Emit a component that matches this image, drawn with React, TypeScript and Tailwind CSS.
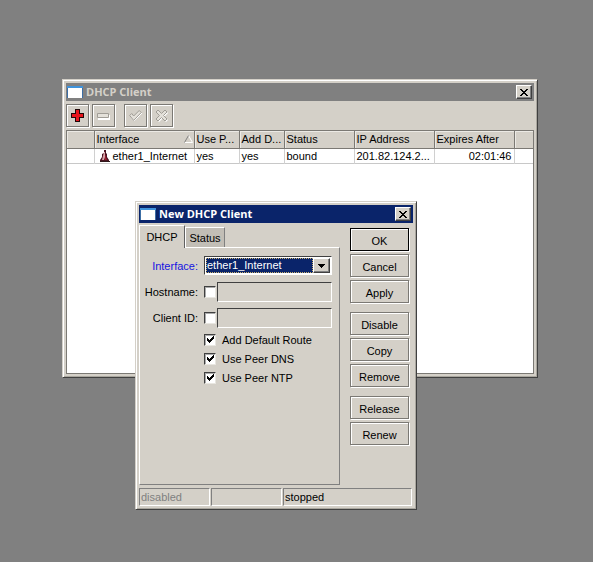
import React, { useState } from "react";
import clsx from "clsx";

const etched =
  "border border-[#7b7974] bg-[#d4d0c8] shadow-[1px_1px_0_#fff,inset_1px_1px_0_#fff]";
const sunken =
  "border border-t-[#808080] border-l-[#808080] border-r-white border-b-white";
const frame =
  "border border-t-[#d4d0c8] border-l-[#d4d0c8] border-r-[#404040] border-b-[#404040] bg-[#d4d0c8] shadow-[inset_1px_1px_0_#fff,inset_-1px_-1px_0_#aaa79f] p-[3px]";

const columns = [
  { title: "", width: "w-[27px]", value: "" },
  { title: "Interface", width: "w-[100px]", value: "ether1_Internet" },
  { title: "Use P...", width: "w-[45px]", value: "yes" },
  { title: "Add D...", width: "w-[45px]", value: "yes" },
  { title: "Status", width: "w-[70px]", value: "bound" },
  { title: "IP Address", width: "w-[80px]", value: "201.82.124.2..." },
  { title: "Expires After", width: "w-[80px]", value: "02:01:46" },
  { title: "", width: "", value: "" },
];

const actions = [
  ["OK", "Cancel", "Apply"],
  ["Disable", "Copy", "Remove"],
  ["Release", "Renew"],
];

const TitleBar = ({ title, active }: { title: string; active?: boolean }) => (
  <div
    className={clsx(
      "flex h-[18px] items-center pl-px pr-[2px]",
      active ? "bg-[#0a246a] text-white" : "bg-[#808080] text-[#d4d0c8]"
    )}
  >
    <svg width="16" height="14" shapeRendering="crispEdges">
      <path d="M0 1h16v12H0z" fill="#3c6ea5" />
      <path d="M0 1h16v2H0z" fill="#3f93dc" />
      <path d="M1 3h14v10H1z" fill="#fff" />
    </svg>
    <h2 className="ml-[3px] flex-1 font-['Open_Sans','Noto_Sans',sans-serif] text-[11px] font-bold leading-[18px]">
      {title}
    </h2>
    <button
      aria-label="Close"
      className="flex h-[14px] w-4 items-center justify-center border border-t-white border-l-white border-r-[#404040] border-b-[#404040] bg-[#d4d0c8] shadow-[inset_-1px_-1px_0_#808080]"
    >
      <svg width="8" height="7" shapeRendering="crispEdges">
        <path
          d="M0 0h2v1h1v1h2v-1h1v-1h2v1h-1v1h-1v1h-1v1h1v1h1v1h1v1h-2v-1h-1v-1h-2v1h-1v1h-2v-1h1v-1h1v-1h1v-1h-1v-1h-1v-1h-1z"
          fill="#000"
        />
      </svg>
    </button>
  </div>
);

const ToolButton = ({
  label,
  children,
}: {
  label: string;
  children: React.ReactNode;
}) => (
  <button
    aria-label={label}
    className={clsx("flex h-[23px] w-[23px] items-center justify-center", etched)}
  >
    <svg width="13" height="13">
      {children}
    </svg>
  </button>
);

const CheckBox = ({
  id,
  label,
  initial,
}: {
  id: string;
  label?: string;
  initial?: boolean;
}) => {
  const [checked, setChecked] = useState(!!initial);

  return (
    <span className="relative flex h-3 w-3 shrink-0">
      <input
        id={id}
        type="checkbox"
        aria-label={label}
        checked={checked}
        onChange={(e) => setChecked(e.target.checked)}
        className="h-3 w-3 appearance-none border border-t-[#404040] border-l-[#404040] border-r-[#e8e6e0] border-b-[#e8e6e0] bg-white shadow-[inset_1px_1px_0_#aaa]"
      />
      {checked && (
        <svg
          width="12"
          height="12"
          className="pointer-events-none absolute inset-0"
          shapeRendering="crispEdges"
        >
          <path
            d="M3 4h1v1h1v1h1v-1h1v-1h1v-1h1v-1h1v3h-1v1h-1v1h-1v1h-1v1h-1v-1h-1v-1h-1z"
            fill="#000"
          />
        </svg>
      )}
    </span>
  );
};

const TextRow = ({ id, label }: { id: string; label: string }) => (
  <div className="flex h-5 items-center">
    <label htmlFor={id} className="w-[58px] text-right">
      {label}
    </label>
    <span className="ml-[6px] flex flex-1 items-center gap-px">
      <CheckBox id={`${id}-on`} label={`${label} enabled`} />
      <input
        id={id}
        type="text"
        className="h-5 w-full min-w-0 border border-t-[#404040] border-l-[#404040] border-r-white border-b-white px-px outline-none"
      />
    </span>
  </div>
);

const ClientWindow = () => (
  <section className={frame}>
    <TitleBar title="DHCP Client" />
    <div className="flex gap-[3px] pb-[3px] pt-[3px]">
      <ToolButton label="Add">
        <path d="M4 0h5v4h4v5h-4v4h-5v-4h-4v-5h4z" fill="#200808" />
        <path d="M5 1h3v4h4v3h-4v4h-3v-4h-4v-3h4z" fill="#e8141c" />
      </ToolButton>
      <ToolButton label="Remove">
        <path d="M1 6h12v5h-12z" fill="#fff" />
        <path d="M.5 4.5h11v4h-11z" fill="#e4e1da" stroke="#a09d96" />
      </ToolButton>
      <span className="w-[3px]" />
      <ToolButton label="Enable">
        <path d="M2 8l3 4 8-8" fill="none" stroke="#fff" />
        <path
          d="M.7 6.5l2-2 2 2.5 5.500-5.500 2 2-7.500 8z"
          fill="#e4e1da"
          stroke="#a09d96"
        />
      </ToolButton>
      <ToolButton label="Disable">
        <path
          d="M2 4l2-2 3.500 3.500L11 2l2 2-3.500 3.500L13 11l-2 2-3.500-3.500L4 13l-2-2 3.500-3.500z"
          fill="#fff"
        />
        <path
          d="M1 3l2-2 3.500 3.500L10 1l2 2-3.500 3.500L12 10l-2 2-3.500-3.500L3 12l-2-2 3.500-3.500z"
          fill="#e4e1da"
          stroke="#a09d96"
        />
      </ToolButton>
    </div>
    <div className="min-h-[244px] border border-[#7b7974] bg-white">
      <table className="w-full table-fixed border-collapse text-left">
        <thead>
          <tr className="h-[17px] border-b border-[#7b7974] bg-[#d4d0c8]">
            {columns.map((c, i) => (
              <th
                key={i}
                className={clsx(
                  "whitespace-nowrap border-r border-[#7b7974] p-0 pl-[2px] font-normal leading-4 shadow-[inset_1px_1px_0_#eceae5] last:border-r-0",
                  c.width
                )}
              >
                <span className="flex items-center justify-between">
                  {c.title}
                  {c.title === "Interface" && (
                    <svg width="9" height="8" className="mr-px">
                      <path d="M4.500 .5l4 7h-8" stroke="#fff" fill="none" />
                      <path d="M4.500 .5L.5 7.500" stroke="#808080" fill="none" />
                    </svg>
                  )}
                </span>
              </th>
            ))}
          </tr>
        </thead>
        <tbody>
          <tr className="h-[15px] border-b border-[#c8c8c8]">
            {columns.map((c, i) => (
              <td
                key={i}
                className="whitespace-nowrap border-r border-[#d0d0d0] p-0 pl-[2px] leading-[14px] last:border-r-0"
              >
                <span
                  className={clsx(
                    "flex items-center",
                    c.title === "Expires After" && "justify-end pr-[2px]"
                  )}
                >
                  {c.title === "Interface" && (
                    <svg width="12" height="12" className="ml-[2px] mr-[2px]">
                      <path d="M5 0h2v3l1 1v3l2 3v2H1v-2l2-3V4l2-1z" fill="#4a1420" />
                      <path d="M5 2h1v5l-1 3H3l1-4z" fill="#d8a0a4" />
                      <path d="M6 4l2 6H6z" fill="#a01c30" />
                      <path d="M1 11h10v1H1z" fill="#30181c" />
                    </svg>
                  )}
                  {c.value}
                </span>
              </td>
            ))}
          </tr>
        </tbody>
      </table>
    </div>
  </section>
);

const NewClientDialog = () => (
  <section
    role="dialog"
    aria-label="New DHCP Client"
    className={clsx("absolute left-[135px] top-[201px] w-[282px]", frame)}
  >
    <TitleBar title="New DHCP Client" active />
    <div className="flex gap-[10px] pr-1">
      <div className="flex flex-1 flex-col pt-[2px]">
        <div role="tablist" className="flex items-end">
          <button
            role="tab"
            aria-selected="true"
            className="relative z-10 -mb-px h-[23px] w-[46px] border border-b-0 border-t-white border-l-white border-r-[#606060] bg-[#d4d0c8]"
          >
            DHCP
          </button>
          <button
            role="tab"
            aria-selected="false"
            className="h-5 w-[40px] border border-b-0 border-t-white border-l-white border-r-[#808080] bg-[#c2beb6]"
          >
            Status
          </button>
        </div>
        <div className="h-[238px] border border-t-white border-l-white border-r-[#808080] border-b-[#808080] pr-[7px] pt-2">
          <div className="flex h-[19px] items-center">
            <label htmlFor="interface" className="w-[58px] text-right text-[#1414e0]">
              Interface:
            </label>
            <span className="relative ml-[6px] flex h-[19px] flex-1 border border-t-[#404040] border-l-[#404040] border-r-white border-b-white bg-white p-px">
              <select
                id="interface"
                className="h-full w-[107px] appearance-none border border-dotted border-[#c8b070] bg-[#0a246a] leading-[13px] text-white outline-none"
              >
                <option>ether1_Internet</option>
              </select>
              <span className="pointer-events-none flex flex-1 items-center justify-center border border-t-white border-l-white border-r-[#404040] border-b-[#404040] bg-[#d4d0c8] shadow-[inset_-1px_-1px_0_#808080]">
                <svg width="7" height="4" shapeRendering="crispEdges">
                  <path d="M0 0h7v1h-1v1h-1v1h-1v1h-1v-1h-1v-1h-1v-1h-1z" />
                </svg>
              </span>
            </span>
          </div>
          <div className="mt-[7px] flex flex-col gap-[6px]">
            <TextRow id="hostname" label="Hostname:" />
            <TextRow id="client-id" label="Client ID:" />
          </div>
          <div className="ml-16 mt-[6px] flex flex-col gap-[7px]">
            {["Add Default Route", "Use Peer DNS", "Use Peer NTP"].map((text) => (
              <div key={text} className="flex h-3 items-center gap-[6px]">
                <CheckBox id={text} initial />
                <label htmlFor={text}>{text}</label>
              </div>
            ))}
          </div>
        </div>
      </div>
      <div className="flex w-[59px] flex-col gap-[9px] pt-[5px]">
        {actions.map((group, i) => (
          <div key={i} className="flex flex-col gap-[3px]">
            {group.map((name) => (
              <button
                key={name}
                className={clsx(
                  "h-[23px] pt-[2px]",
                  etched,
                  name === "OK" && "!border-black"
                )}
              >
                {name}
              </button>
            ))}
          </div>
        ))}
      </div>
    </div>
    <div className="mt-[3px] flex gap-px pr-px leading-4">
      <span className={clsx("h-[18px] w-[71px] pl-px text-[#808080]", sunken)}>
        disabled
      </span>
      <span className={clsx("h-[18px] w-[71px]", sunken)} />
      <span className={clsx("h-[18px] flex-1 pl-px", sunken)}>stopped</span>
    </div>
  </section>
);

const App = () => {
  return (
    <main className="relative min-h-screen bg-[#808080] pb-6 pl-[62px] pr-[55px] pt-[79px] font-['Liberation_Sans',Arial,sans-serif] text-[11px] leading-[14px] text-black">
      <ClientWindow />
      <NewClientDialog />
    </main>
  );
};

export default App;
